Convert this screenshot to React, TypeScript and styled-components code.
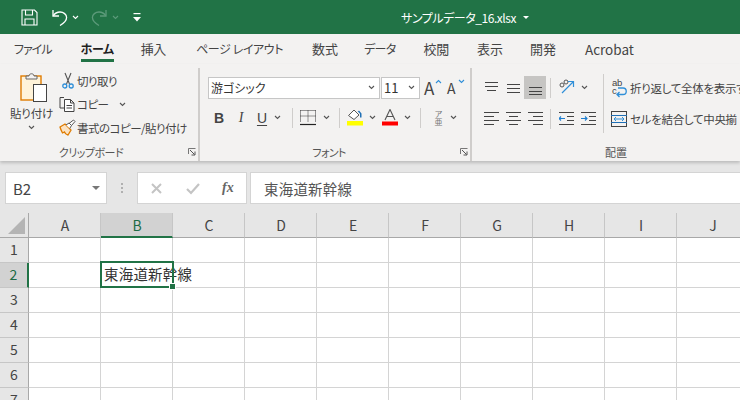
import React from 'react';
import styled, { createGlobalStyle } from 'styled-components';

const GlobalStyle = createGlobalStyle`
  html, body {
    margin: 0;
    padding: 0;
    width: 740px;
    height: 400px;
    overflow: hidden;
    background: #ffffff;
  }
  * { box-sizing: border-box; }
  body {
    font-family: 'Noto Sans CJK JP', 'Noto Sans', sans-serif;
    font-feature-settings: 'palt';
    color: #444444;
  }
`;

const Chev = ({ color = '#555', up }: { color?: string; up?: boolean }) => (
  <svg width="7" height="5" viewBox="0 0 7 5" fill="none">
    <path d={up ? 'M1 4l2.500-2.500L6 4' : 'M1 1l2.500 2.500L6 1'} stroke={color} strokeWidth="1.1" />
  </svg>
);

const Launcher = () => (
  <svg width="8" height="8" viewBox="0 0 8 8" fill="none">
    <path d="M.5 6V.5H7.5" stroke="#777" />
    <path d="M2 2l4.500 4.500M3.500 7H7V3.500" stroke="#555" />
  </svg>
);

const SaveIcon = () => (
  <svg width="17" height="17" viewBox="0 0 17 17" fill="none" stroke="#fff" strokeWidth="1.1">
    <path d="M1 1h12.500L16 3.500V16H1z" />
    <path d="M4.500 1v5h7V1M4 16v-6h9v6" />
  </svg>
);

const UndoIcon = () => (
  <svg width="16" height="17" viewBox="0 0 16 17" fill="none" stroke="#fff" strokeWidth="1.3">
    <path d="M1 1v6h6" />
    <path d="M1.200 6.800C3 4 5.500 3 8 3c3.500 0 6.600 2.500 6.600 5.500 0 3-2.500 5.500-6.600 8" />
  </svg>
);

const RedoIcon = () => (
  <svg width="16" height="17" viewBox="0 0 16 17" fill="none" stroke="#5c9a7a" strokeWidth="1.3">
    <path d="M15 1v6H9" />
    <path d="M14.800 6.800C13 4 10.500 3 8 3 4.500 3 1.400 5.500 1.400 8.500c0 3 2.500 5.500 6.600 8" />
  </svg>
);

const QatIcon = () => (
  <svg width="8" height="9" viewBox="0 0 8 9" fill="#fff">
    <rect x="0.5" y="0" width="7" height="1.2" />
    <path d="M0 4h8L4 8.500z" />
  </svg>
);

const PasteIcon = () => (
  <svg width="28" height="30" viewBox="0 0 28 30" fill="none">
    <rect x="1" y="4" width="20" height="24" fill="#fff3d9" stroke="#e07c00" strokeWidth="1.4" />
    <path d="M6 7V4h3c0-3 5-3 5 0h3v3z" fill="#f3f2f1" stroke="#666" />
    <rect x="13.500" y="12.500" width="13" height="17" fill="#fff" stroke="#444" />
  </svg>
);

const ScissorsIcon = () => (
  <svg width="12" height="17" viewBox="0 0 12 17" fill="none">
    <path d="M3 1l4.500 11M9 1L4.500 12" stroke="#555" strokeWidth="1.1" />
    <circle cx="2.800" cy="14" r="2" stroke="#2f8fd8" strokeWidth="1.3" />
    <circle cx="9.200" cy="14" r="2" stroke="#2f8fd8" strokeWidth="1.3" />
  </svg>
);

const CopyIcon = () => (
  <svg width="17" height="16" viewBox="0 0 17 16" fill="none" stroke="#444" strokeWidth="1">
    <path d="M5 1.500H1v10.500h4" />
    <path d="M5.500 3.500h6l3.500 3.500v8.500H5.500zM11.500 3.500V7H15" fill="#fff" />
    <path d="M7.500 9.500h5.500M7.500 12h5.500" />
  </svg>
);

const BrushIcon = () => (
  <svg width="17" height="17" viewBox="0 0 17 17" fill="none">
    <path d="M1 8l5-3 6 6-3 5c-2-.5-3-1.500-3.500-3L3.500 14C2.500 12 1.500 10 1 8z" fill="#fbe3c4" stroke="#e07c00" strokeWidth="1.3" />
    <path d="M7 6l3-2 2.500 2.500-1.800 3M10 4.500l4.500-3.500 1.500 1.500-3.500 4" fill="#fff" stroke="#555" />
  </svg>
);

const BorderIcon = () => (
  <svg width="16" height="16" viewBox="0 0 16 16" fill="none">
    <path d="M.5.5h15M.5.5v11M15.500.5v11M8 .5v11M.5 6h15" stroke="#333" strokeDasharray="1 1" />
    <path d="M0 14.500h16" stroke="#222" strokeWidth="1.2" />
  </svg>
);

const FillIcon = () => (
  <svg width="16" height="17" viewBox="0 0 16 17" fill="none">
    <path d="M1.500 6.500L7 1l5 5-5 4.500z" fill="#fff" stroke="#555" />
    <path d="M13 5c-.8-1.500-1.500-2-2.500-2L12 1.500l2.500 3v4H13z" fill="#1f6fb5" />
    <rect x="0" y="12" width="16" height="4.500" fill="#ffff00" />
  </svg>
);

const FontColorIcon = () => (
  <svg width="16" height="17" viewBox="0 0 16 17" fill="none">
    <path d="M3 11L8 .5 13 11M4.800 7.500h6.400" stroke="#555" strokeWidth="1.1" />
    <rect x="0" y="12.500" width="16" height="4" fill="#ff0000" />
  </svg>
);

const LinesIcon = ({ lines }: { lines: number[][] }) => (
  <svg width="15" height="17" viewBox="0 0 15 17" fill="none" stroke="#444" strokeWidth="1">
    {lines.map(([x1, y, x2]) => (
      <path key={`${x1}-${y}`} d={`M${x1} ${y + 0.5}H${x2}`} />
    ))}
  </svg>
);

const OrientIcon = () => (
  <svg width="18" height="18" viewBox="0 0 18 18" fill="none">
    <circle cx="4" cy="6" r="2" stroke="#555" />
    <circle cx="8" cy="3" r="2" stroke="#555" />
    <path d="M4 14L15 3M10 2.500h5.500V8" stroke="#2f8fd8" strokeWidth="1.200" />
  </svg>
);

const IndentIcon = ({ flip }: { flip?: boolean }) => (
  <svg width="15" height="13" viewBox="0 0 15 13" fill="none">
    <path d="M0 .5h15M8 4.500h7M8 8.500h7M0 12.500h15" stroke="#444" />
    <path d={flip ? 'M0 6.500h6M4 4.500l2 2-2 2' : 'M6 6.500H0M2 4.500l-2 2 2 2'} stroke="#1f7fd0" strokeWidth="1.100" />
  </svg>
);

const WrapIcon = () => (
  <svg width="16" height="20" viewBox="0 0 16 20" fill="none">
    <path d="M7 10h5a2.800 2.800 0 010 6.500H6M8.500 14l-2.500 2.500L8.500 19" stroke="#2f8fd8" strokeWidth="1.300" />
    <text x="1" y="8" fontSize="9.500" fill="#444" fontFamily="Liberation Sans, sans-serif">ab</text>
    <text x="1" y="16" fontSize="9.500" fill="#444" fontFamily="Liberation Sans, sans-serif">c</text>
  </svg>
);

const MergeIcon = () => (
  <svg width="16" height="16" viewBox="0 0 16 16" fill="none">
    <rect x=".5" y=".5" width="15" height="15" stroke="#444" />
    <path d="M0 4.500h16M0 11.500h16" stroke="#1f6fb5" />
    <path d="M3 8h10M5 6L3 8l2 2M11 6l2 2-2 2" stroke="#2f8fd8" />
  </svg>
);

const Page = styled.div`
  width: 740px;
  height: 400px;
  overflow: hidden;
  display: flex;
  flex-direction: column;
  background: #e6e6e6;
`;

const TitleBar = styled.header`
  height: 34px;
  flex: none;
  background: #217346;
  display: flex;
  align-items: center;
  padding-left: 21px;
  color: #ffffff;
`;

const QatItem = styled.span<{ $gap: number }>`
  display: inline-flex;
  align-items: center;
  margin-right: ${p => p.$gap}px;
`;

const TitleText = styled.div`
  font-size: 12px;
  letter-spacing: -0.45px;
  margin-left: 260px;
  display: flex;
  align-items: center;
  gap: 7px;
  white-space: nowrap;
`;

const Caret = styled.span`
  width: 0;
  height: 0;
  border-left: 3px solid transparent;
  border-right: 3px solid transparent;
  border-top: 3px solid #ffffff;
`;

const NameCaret = styled(Caret)`
  border-left-width: 4px;
  border-right-width: 4px;
  border-top: 4px solid #777777;
`;

const Tabs = styled.nav`
  height: 30px;
  flex: none;
  background: #f3f2f1;
  display: flex;
  padding-left: 14px;
`;

const Tab = styled.div<{ $active?: boolean; $size: number; $ls: number; $gap: number }>`
  height: 28px;
  margin-right: ${p => p.$gap}px;
  padding-top: 5px;
  font-size: ${p => p.$size}px;
  letter-spacing: ${p => p.$ls}px;
  line-height: 20px;
  white-space: nowrap;
  color: ${p => (p.$active ? '#1f1f1f' : '#444444')};
  font-weight: ${p => (p.$active ? 700 : 400)};
  border-bottom: ${p => (p.$active ? '3px solid #217346' : '3px solid transparent')};
`;

const Ribbon = styled.section`
  height: 97px;
  flex: none;
  background: #f3f2f1;
  display: flex;
  box-shadow: 0 2px 3px rgba(0, 0, 0, 0.18);
  position: relative;
`;

const Group = styled.div<{ $w: number; $last?: boolean }>`
  width: ${p => p.$w}px;
  flex: none;
  height: 93px;
  margin-top: 4px;
  display: flex;
  flex-direction: column;
  border-right: ${p => (p.$last ? 'none' : '2px solid #cfcdcb')};
`;

const GroupBody = styled.div<{ $pl: number }>`
  height: 75px;
  flex: none;
  padding-left: ${p => p.$pl}px;
  display: flex;
`;

const GroupFoot = styled.div<{ $pl?: number; $pr?: number; $ls?: number }>`
  flex: 1;
  display: flex;
  align-items: center;
  justify-content: center;
  position: relative;
  padding-left: ${p => p.$pl ?? 0}px;
  padding-right: ${p => p.$pr ?? 0}px;
  font-size: 11px;
  letter-spacing: ${p => p.$ls ?? 0}px;
  color: #555555;
`;

const FootLauncher = styled.span`
  position: absolute;
  right: 2px;
  top: 5px;
  display: flex;
`;

const PasteButton = styled.div`
  width: 41px;
  flex: none;
  display: flex;
  flex-direction: column;
  align-items: center;
  padding-top: 4px;
  font-size: 11.500px;
  letter-spacing: -0.2px;
  line-height: 16px;
  white-space: nowrap;
  svg:first-child { margin-left: 5px; }
  span { margin-top: 3px; }
  svg:last-child { margin-top: 4px; }
`;

const ClipList = styled.div`
  margin-left: 6px;
  display: flex;
  flex-direction: column;
  padding-top: 1px;
`;

const ClipRow = styled.div`
  height: 23.500px;
  display: flex;
  align-items: center;
  font-size: 11.500px;
  letter-spacing: -0.5px;
  white-space: nowrap;
`;

const ClipIcon = styled.span`
  width: 19px;
  flex: none;
  display: flex;
  justify-content: center;
`;

const ChevGap = styled.span<{ $ml: number }>`
  display: inline-flex;
  margin-left: ${p => p.$ml}px;
`;

const FontRows = styled.div`
  display: flex;
  flex-direction: column;
  padding-top: 9px;
  gap: 9px;
`;

const FontRow = styled.div`
  display: flex;
  align-items: center;
  height: 21px;
`;

const SelectBox = styled.div<{ $w: number; $mr?: number; $size?: number }>`
  width: ${p => p.$w}px;
  height: 22px;
  margin-right: ${p => p.$mr ?? 0}px;
  background: #ffffff;
  border: 1px solid #c6c6c6;
  display: flex;
  align-items: center;
  justify-content: space-between;
  padding: 0 4px 0 2px;
  font-size: ${p => p.$size ?? 12}px;
  color: #333333;
  white-space: nowrap;
`;

const GrowA = styled.span<{ $size: number; $ml: number }>`
  position: relative;
  display: inline-block;
  margin-left: ${p => p.$ml}px;
  width: 16px;
  font-size: ${p => p.$size}px;
  line-height: 20px;
  color: #444444;
`;

const Tick = styled.span`
  position: absolute;
  right: -2px;
  top: 1px;
  display: flex;
`;

const StyleBtn = styled.span<{ $ml: number; $w?: number }>`
  margin-left: ${p => p.$ml}px;
  width: ${p => p.$w ?? 8}px;
  flex: none;
  display: inline-flex;
  justify-content: center;
  font-family: 'Liberation Serif', serif;
  font-size: 14px;
  color: #444444;
  line-height: 18px;
`;

const BoldLetter = styled(StyleBtn)`
  font-family: 'Liberation Sans', sans-serif;
  font-weight: 700;
`;

const ItalicLetter = styled(StyleBtn)`
  font-style: italic;
`;

const UnderLetter = styled(StyleBtn)`
  font-family: 'Liberation Sans', sans-serif;
  text-decoration: underline;
  text-underline-offset: 2px;
`;

const RowSep = styled.span<{ $ml: number }>`
  width: 1px;
  height: 20px;
  flex: none;
  margin-left: ${p => p.$ml}px;
  background: #cfcdcb;
`;

const IconSlot = styled.span<{ $ml: number }>`
  margin-left: ${p => p.$ml}px;
  display: inline-flex;
  flex: none;
`;

const Phonetic = styled.span<{ $ml: number }>`
  margin-left: ${p => p.$ml}px;
  width: 15px;
  display: inline-flex;
  flex-direction: column;
  align-items: center;
  color: #777777;
  font-size: 8px;
  line-height: 8px;
`;

const AlignGrid = styled.div`
  display: flex;
  flex-direction: column;
  padding-top: 8px;
  width: 131px;
  gap: 8px;
  flex: none;
`;

const AlignRow = styled.div`
  display: flex;
  align-items: center;
  height: 23px;
`;

const AlignBtn = styled.span<{ $active?: boolean; $ml: number }>`
  width: 22px;
  height: 23px;
  flex: none;
  margin-left: ${p => p.$ml}px;
  display: inline-flex;
  align-items: center;
  justify-content: center;
  background: ${p => (p.$active ? '#c6c5c3' : 'transparent')};
`;

const WrapColumn = styled.div`
  border-left: 1px solid #cfcdcb;
  margin-top: 6px;
  height: 59px;
  padding-left: 7px;
  flex: none;
  width: 137px;
  display: flex;
  flex-direction: column;
  justify-content: space-between;
  font-size: 11.500px;
  letter-spacing: -0.3px;
  white-space: nowrap;
`;

const WrapRow = styled.div`
  display: flex;
  align-items: center;
  gap: 3px;
  height: 28px;
  svg { flex: none; }
`;

const FormulaBar = styled.div`
  height: 32px;
  flex: none;
  margin-top: 11px;
  display: flex;
  align-items: stretch;
  padding-left: 5px;
`;

const NameBox = styled.div`
  width: 102px;
  background: #ffffff;
  border: 1px solid #d4d4d4;
  display: flex;
  align-items: center;
  justify-content: space-between;
  padding: 0 6px 0 7px;
  font-size: 15px;
  color: #444444;
`;

const Grip = styled.span`
  width: 30px;
  display: flex;
  flex-direction: column;
  align-items: center;
  justify-content: center;
  gap: 2px;
  i { width: 2px; height: 2px; background: #b0b0b0; }
`;

const FxBox = styled.div`
  width: 110px;
  background: #ffffff;
  border: 1px solid #d4d4d4;
  display: flex;
  align-items: center;
  padding-left: 12px;
`;

const FxIcon = styled.span<{ $ml: number }>`
  display: inline-flex;
  margin-left: ${p => p.$ml}px;
`;

const FxLabel = styled.span`
  margin-left: 22px;
  font-family: 'Liberation Serif', serif;
  font-style: italic;
  font-weight: 700;
  font-size: 14px;
  color: #666666;
`;

const FormulaInput = styled.div`
  flex: 1;
  margin-left: 3px;
  background: #ffffff;
  border: 1px solid #d4d4d4;
  border-right: none;
  padding-left: 13px;
  display: flex;
  align-items: center;
  font-size: 14.400px;
  letter-spacing: 0.3px;
  font-feature-settings: normal;
  color: #555555;
`;

const Sheet = styled.div`
  margin-top: 9px;
  flex: 1;
  display: grid;
  grid-template-columns: 29px repeat(10, 72px);
  grid-template-rows: 25px repeat(7, 25px);
  background: #ffffff;
`;

const Corner = styled.div`
  background: #e6e6e6;
  border-right: 1px solid #a8a8a8;
  border-bottom: 1px solid #a8a8a8;
  position: relative;
  &::after {
    content: '';
    position: absolute;
    right: 3px;
    bottom: 3px;
    border-left: 17px solid transparent;
    border-bottom: 17px solid #b4b4b4;
  }
`;

const ColHead = styled.div<{ $sel?: boolean }>`
  background: ${p => (p.$sel ? '#d2d2d2' : '#e6e6e6')};
  color: ${p => (p.$sel ? '#1d6b45' : '#444444')};
  border-right: 1px solid #c6c6c6;
  border-bottom: ${p => (p.$sel ? '2px solid #217346' : '1px solid #a8a8a8')};
  display: flex;
  align-items: center;
  justify-content: center;
  font-size: 14px;
  padding-left: 1px;
`;

const RowHead = styled.div<{ $sel?: boolean }>`
  background: ${p => (p.$sel ? '#d2d2d2' : '#e6e6e6')};
  color: ${p => (p.$sel ? '#1d6b45' : '#444444')};
  border-right: ${p => (p.$sel ? '2px solid #217346' : '1px solid #a8a8a8')};
  border-bottom: 1px solid #c6c6c6;
  display: flex;
  align-items: center;
  justify-content: center;
  font-size: 14px;
  padding-bottom: 2px;
`;

const Cell = styled.div<{ $sel?: boolean }>`
  border-right: 1px solid #d4d4d4;
  border-bottom: 1px solid #d4d4d4;
  position: relative;
  font-size: 14.400px;
  line-height: 22px;
  padding-left: 3px;
  white-space: nowrap;
  color: #333333;
  font-feature-settings: normal;
  letter-spacing: 0.3px;
  ${p => (p.$sel ? 'z-index: 2;' : '')}
`;

const SelectionBox = styled.span`
  position: absolute;
  left: -1px;
  top: -2px;
  width: 74px;
  height: 27px;
  border: 2px solid #217346;
  pointer-events: none;
`;

const FillHandle = styled.span`
  position: absolute;
  right: -4px;
  bottom: -4px;
  width: 7px;
  height: 7px;
  background: #217346;
  border: 1px solid #ffffff;
`;

const columns = ['A', 'B', 'C', 'D', 'E', 'F', 'G', 'H', 'I', 'J'];
const rows = [1, 2, 3, 4, 5, 6, 7];
const tabs = [
  { label: 'ファイル', size: 12, ls: -1, gap: 29 },
  { label: 'ホーム', size: 12, ls: -0.4, gap: 27 },
  { label: '挿入', size: 13, ls: -0.3, gap: 30 },
  { label: 'ページ レイアウト', size: 12, ls: -0.4, gap: 29 },
  { label: '数式', size: 13, ls: 0, gap: 26 },
  { label: 'データ', size: 12, ls: -0.7, gap: 28 },
  { label: '校閲', size: 13, ls: -0.3, gap: 28 },
  { label: '表示', size: 13, ls: 0, gap: 27 },
  { label: '開発', size: 13, ls: 0, gap: 29 },
  { label: 'Acrobat', size: 13.500, ls: 0, gap: 0 },
];

const vTop = [[1, 3, 14], [1, 7, 14], [3, 11, 12]];
const vMid = [[1, 5, 14], [1, 9, 14], [1, 13, 14]];
const vBot = [[1, 8, 14], [1, 12, 14], [1, 15, 14]];
const hLeft = [[0, 2, 15], [0, 6, 10], [0, 10, 15], [0, 14, 10]];
const hCenter = [[0, 2, 15], [3, 6, 12], [0, 10, 15], [3, 14, 12]];
const hRight = [[0, 2, 15], [5, 6, 15], [0, 10, 15], [5, 14, 15]];

const App: React.FC = () => {
  return (
    <Page>
      <GlobalStyle />
      <TitleBar>
        <QatItem $gap={14}><SaveIcon /></QatItem>
        <QatItem $gap={4}><UndoIcon /></QatItem>
        <QatItem $gap={12}><Chev color="#fff" /></QatItem>
        <QatItem $gap={5}><RedoIcon /></QatItem>
        <QatItem $gap={14}><Chev color="#5c9a7a" /></QatItem>
        <QatItem $gap={0}><QatIcon /></QatItem>
        <TitleText>サンプルデータ_16.xlsx<Caret /></TitleText>
      </TitleBar>

      <Tabs>
        {tabs.map(t => (
          <Tab key={t.label} $active={t.label === 'ホーム'} $size={t.size} $ls={t.ls} $gap={t.gap}>{t.label}</Tab>
        ))}
      </Tabs>

      <Ribbon>
        <Group $w={200}>
          <GroupBody $pl={11}>
            <PasteButton>
              <PasteIcon />
              <span>貼り付け</span>
              <Chev />
            </PasteButton>
            <ClipList>
              <ClipRow><ClipIcon><ScissorsIcon /></ClipIcon>切り取り</ClipRow>
              <ClipRow><ClipIcon><CopyIcon /></ClipIcon>コピー<ChevGap $ml={11}><Chev /></ChevGap></ClipRow>
              <ClipRow><ClipIcon><BrushIcon /></ClipIcon>書式のコピー/貼り付け</ClipRow>
            </ClipList>
          </GroupBody>
          <GroupFoot $pr={16} $ls={-0.5}>クリップボード<FootLauncher><Launcher /></FootLauncher></GroupFoot>
        </Group>

        <Group $w={272}>
          <GroupBody $pl={8}>
            <FontRows>
              <FontRow>
                <SelectBox $w={172} $mr={1}>游ゴシック<Chev /></SelectBox>
                <SelectBox $w={39} $size={13}>11<Chev /></SelectBox>
                <GrowA $size={17} $ml={4}>A<Tick><Chev color="#2f8fd8" up /></Tick></GrowA>
                <GrowA $size={14} $ml={7}>A<Tick><Chev color="#2f8fd8" /></Tick></GrowA>
              </FontRow>
              <FontRow>
                <BoldLetter $ml={7}>B</BoldLetter>
                <ItalicLetter $ml={14}>I</ItalicLetter>
                <UnderLetter $ml={13}>U</UnderLetter>
                <ChevGap $ml={8}><Chev /></ChevGap>
                <RowSep $ml={11} />
                <IconSlot $ml={7}><BorderIcon /></IconSlot>
                <ChevGap $ml={7}><Chev /></ChevGap>
                <RowSep $ml={9} />
                <IconSlot $ml={7}><FillIcon /></IconSlot>
                <ChevGap $ml={6}><Chev /></ChevGap>
                <IconSlot $ml={6}><FontColorIcon /></IconSlot>
                <ChevGap $ml={6}><Chev /></ChevGap>
                <RowSep $ml={9} />
                <Phonetic $ml={10}>ア<span>亜</span></Phonetic>
                <ChevGap $ml={4}><Chev /></ChevGap>
              </FontRow>
            </FontRows>
          </GroupBody>
          <GroupFoot $pr={12} $ls={-0.7}>フォント<FootLauncher><Launcher /></FootLauncher></GroupFoot>
        </Group>

        <Group $w={268} $last>
          <GroupBody $pl={0}>
            <AlignGrid>
              <AlignRow>
                <AlignBtn $ml={8}><LinesIcon lines={vTop} /></AlignBtn>
                <AlignBtn $ml={0}><LinesIcon lines={vMid} /></AlignBtn>
                <AlignBtn $ml={0} $active><LinesIcon lines={vBot} /></AlignBtn>
                <RowSep $ml={4} />
                <IconSlot $ml={7}><OrientIcon /></IconSlot>
                <ChevGap $ml={5}><Chev /></ChevGap>
              </AlignRow>
              <AlignRow>
                <AlignBtn $ml={8}><LinesIcon lines={hLeft} /></AlignBtn>
                <AlignBtn $ml={0}><LinesIcon lines={hCenter} /></AlignBtn>
                <AlignBtn $ml={0}><LinesIcon lines={hRight} /></AlignBtn>
                <RowSep $ml={4} />
                <IconSlot $ml={8}><IndentIcon /></IconSlot>
                <IconSlot $ml={7}><IndentIcon flip /></IconSlot>
              </AlignRow>
            </AlignGrid>
            <WrapColumn>
              <WrapRow><WrapIcon />折り返して全体を表示す</WrapRow>
              <WrapRow><MergeIcon />セルを結合して中央揃</WrapRow>
            </WrapColumn>
          </GroupBody>
          <GroupFoot $pl={20}>配置</GroupFoot>
        </Group>
      </Ribbon>

      <FormulaBar>
        <NameBox>B2<NameCaret /></NameBox>
        <Grip><i /><i /><i /></Grip>
        <FxBox>
          <FxIcon $ml={0}><svg width="13" height="13" viewBox="0 0 13 13" stroke="#c4c4c4" strokeWidth="2" fill="none"><path d="M2 2l9 9M11 2l-9 9" /></svg></FxIcon>
          <FxIcon $ml={23}><svg width="14" height="13" viewBox="0 0 14 13" stroke="#c4c4c4" strokeWidth="2.200" fill="none"><path d="M1 7l4 4 8-9" /></svg></FxIcon>
          <FxLabel>fx</FxLabel>
        </FxBox>
        <FormulaInput>東海道新幹線</FormulaInput>
      </FormulaBar>

      <Sheet>
        <Corner />
        {columns.map(c => (
          <ColHead key={c} $sel={c === 'B'}>{c}</ColHead>
        ))}
        {rows.map(r => (
          <React.Fragment key={r}>
            <RowHead $sel={r === 2}>{r}</RowHead>
            {columns.map(c => {
              const sel = r === 2 && c === 'B';
              return (
                <Cell key={c} $sel={sel}>
                  {sel && '東海道新幹線'}
                  {sel && <SelectionBox><FillHandle /></SelectionBox>}
                </Cell>
              );
            })}
          </React.Fragment>
        ))}
      </Sheet>
    </Page>
  );
};

export default App;
